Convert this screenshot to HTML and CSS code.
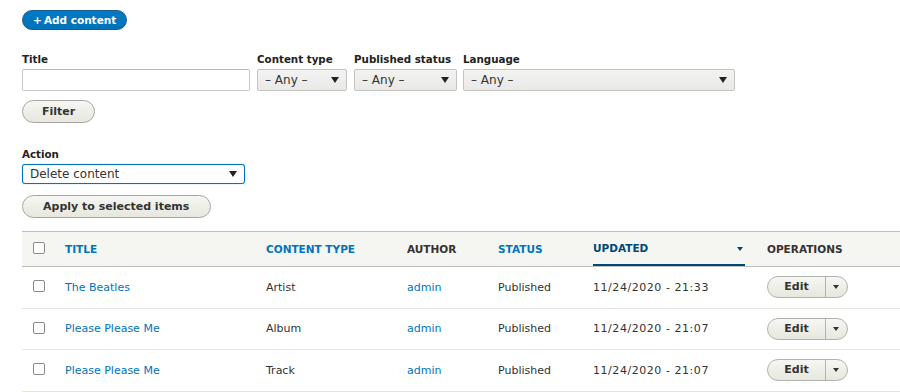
FILE: index.html
```html
<!DOCTYPE html>
<html>
<head>
<meta charset="utf-8">
<link rel="stylesheet" href="styles.css">
</head>
<body>
<div class="page">
  <div class="actions-top"><a class="btn-primary" href="#">+&#8201;Add content</a></div>

  <div class="filters">
    <div class="field f-title">
      <label>Title</label>
      <input type="text" class="text-input">
    </div>
    <div class="field f-type">
      <label>Content type</label>
      <div class="select"><span>– Any –</span><i class="caret"></i></div>
    </div>
    <div class="field f-status">
      <label>Published status</label>
      <div class="select"><span>– Any –</span><i class="caret"></i></div>
    </div>
    <div class="field f-lang">
      <label>Language</label>
      <div class="select"><span>– Any –</span><i class="caret"></i></div>
    </div>
  </div>
  <div class="btn-row"><button class="btn btn-filter">Filter</button></div>

  <div class="field f-action">
    <label>Action</label>
    <div class="select focus"><span>Delete content</span><i class="caret"></i></div>
  </div>
  <div class="btn-row2"><button class="btn btn-apply">Apply to selected items</button></div>

  <table class="content-table">
    <colgroup>
      <col class="c-check"><col class="c-title"><col class="c-type"><col class="c-author"><col class="c-status"><col class="c-updated"><col class="c-ops">
    </colgroup>
    <thead>
      <tr>
        <th class="check"><span class="cb"></span></th>
        <th><a href="#">Title</a></th>
        <th><a href="#">Content type</a></th>
        <th class="plain">Author</th>
        <th><a href="#">Status</a></th>
        <th class="active"><a href="#">Updated<i class="sort"></i></a></th>
        <th class="plain">Operations</th>
      </tr>
    </thead>
    <tbody>
      <tr>
        <td class="check"><span class="cb"></span></td>
        <td><a href="#">The Beatles</a></td>
        <td>Artist</td>
        <td><a href="#">admin</a></td>
        <td>Published</td>
        <td class="date">11/24/2020 - 21:33</td>
        <td><div class="dropbutton"><span class="db-main">Edit</span><span class="db-toggle"><i class="db-caret"></i></span></div></td>
      </tr>
      <tr>
        <td class="check"><span class="cb"></span></td>
        <td><a href="#">Please Please Me</a></td>
        <td>Album</td>
        <td><a href="#">admin</a></td>
        <td>Published</td>
        <td class="date">11/24/2020 - 21:07</td>
        <td><div class="dropbutton"><span class="db-main">Edit</span><span class="db-toggle"><i class="db-caret"></i></span></div></td>
      </tr>
      <tr>
        <td class="check"><span class="cb"></span></td>
        <td><a href="#">Please Please Me</a></td>
        <td>Track</td>
        <td><a href="#">admin</a></td>
        <td>Published</td>
        <td class="date">11/24/2020 - 21:07</td>
        <td><div class="dropbutton"><span class="db-main">Edit</span><span class="db-toggle"><i class="db-caret"></i></span></div></td>
      </tr>
    </tbody>
  </table>
</div>
</body>
</html>
```

FILE: styles.css
```css
html, body {
  margin: 0;
  padding: 0;
  background: #fff;
}
body {
  font-family: "DejaVu Sans", "Liberation Sans", sans-serif;
  color: #333;
  font-size: 11px;
  overflow: hidden;
}
a { color: #0074bd; text-decoration: none; }

.page {
  padding: 10px 0 0 22px;
}

.actions-top { height: 20px; }
.btn-primary {
  display: inline-block;
  box-sizing: border-box;
  height: 20px;
  padding: 0 10px 0 10px;
  background: linear-gradient(#007bc6, #0071b8);
  border: 1px solid #1e5c90;
  border-radius: 10px;
  color: #fff;
  font-weight: bold;
  font-size: 10.5px;
  line-height: 18px;
}

.filters {
  display: flex;
  gap: 7px;
  margin-top: 22px;
}
.field label {
  display: block;
  font-weight: bold;
  font-size: 10.3px;
  line-height: 14px;
  margin-bottom: 3px;
  color: #222;
}
.text-input {
  display: block;
  box-sizing: border-box;
  width: 228px;
  height: 22px;
  margin: 0;
  border: 1px solid #c9c9c5;
  border-top-color: #b8b8b4;
  border-radius: 2px;
  background: #fff;
  padding: 0 6px;
}
.select {
  display: flex;
  align-items: center;
  justify-content: space-between;
  box-sizing: border-box;
  height: 22px;
  padding: 0 7px 0 7px;
  border: 1px solid #c4c4c0;
  border-radius: 2px;
  background: linear-gradient(#f3f3f1, #e9e9e6);
  font-size: 12px;
  color: #333;
}
.caret {
  width: 0; height: 0;
  border-left: 4px solid transparent;
  border-right: 4px solid transparent;
  border-top: 6px solid #222;
}
.f-type .select { width: 90px; }
.f-status .select { width: 103px; }
.f-lang { margin-left: -1px; }
.f-lang .select { width: 272px; }

.btn-row { margin-top: 9px; height: 23px; }
.btn {
  display: inline-block;
  box-sizing: border-box;
  height: 23px;
  padding: 0 18px;
  border: 1px solid #a6a6a6;
  border-radius: 12px;
  background: linear-gradient(#f6f6f3, #e7e7df);
  font-family: inherit;
  font-weight: bold;
  font-size: 11px;
  color: #333;
  margin: 0;
  white-space: nowrap;
}
.btn-filter { padding: 0 19px; }
.btn-apply { padding: 0 21px 0 20px; }

.f-action { margin-top: 24px; }
.f-action .select {
  width: 223px;
  height: 20px;
  background: #fff;
  border: 1px solid #0074bd;
  box-shadow: 0 0 1px #40a0e0;
  border-radius: 3px;
}
.btn-row2 { margin-top: 11px; height: 23px; }

.content-table {
  margin-top: 13px;
  width: 900px;
  border-collapse: collapse;
  table-layout: fixed;
}
.c-check { width: 33px; }
.c-title { width: 201px; }
.c-type { width: 141px; }
.c-author { width: 91px; }
.c-status { width: 95px; }
.c-updated { width: 174px; }

.content-table thead tr {
  background: #f5f5f2;
  border-top: 1px solid #bfbfba;
  border-bottom: 1px solid #bfbfba;
}
.content-table th {
  height: 34px;
  box-sizing: border-box;
  text-align: left;
  font-size: 10.5px;
  font-weight: bold;
  text-transform: uppercase;
  padding: 0 10px;
  color: #333;
}
.content-table th.check,
.content-table td.check { padding: 0 0 0 11px; }
.content-table th.active { padding-right: 12px; }
.content-table th.active a {
  display: block;
  position: relative;
  color: #004875;
  line-height: 31px;
  border-bottom: 2px solid #004875;
  margin-top: 1px;
}
.sort {
  position: absolute;
  right: 2px;
  top: 14px;
  width: 0; height: 0;
  border-left: 3px solid transparent;
  border-right: 3px solid transparent;
  border-top: 4px solid #004875;
}

.content-table tbody tr { border-bottom: 1px solid #e6e4df; }
.content-table td {
  height: 40.5px;
  padding: 0 10px;
  font-size: 11px;
  color: #333;
}
.content-table td.date { letter-spacing: 0.55px; }
.cb {
  display: block;
  box-sizing: border-box;
  width: 12px;
  height: 12px;
  border: 1px solid #8a8a8a;
  border-radius: 2px;
  background: #fff;
  margin-top: -2px;
}

.dropbutton {
  display: flex;
  box-sizing: border-box;
  width: 81px;
  height: 22px;
  border: 1px solid #b3b3ae;
  border-radius: 11px;
  background: linear-gradient(#f6f6f3, #e7e7df);
  overflow: hidden;
}
.db-main {
  width: 57px;
  text-align: center;
  line-height: 20px;
  font-weight: bold;
  font-size: 11px;
  color: #333;
  border-right: 1px solid #b3b3ae;
}
.db-toggle {
  flex: 1;
  display: flex;
  align-items: center;
  justify-content: center;
}
.db-caret {
  width: 0; height: 0;
  border-left: 3px solid transparent;
  border-right: 3px solid transparent;
  border-top: 4px solid #333;
  margin-right: 2px;
}
```
